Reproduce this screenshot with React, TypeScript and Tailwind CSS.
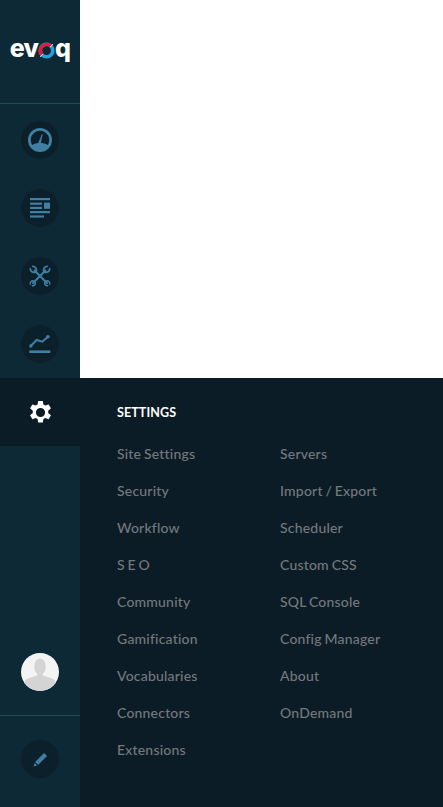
import { FaPen } from "react-icons/fa";

const leftLinks = ["Site Settings", "Security", "Workflow", "S E O", "Community", "Gamification", "Vocabularies", "Connectors", "Extensions"];
const rightLinks = ["Servers", "Import / Export", "Scheduler", "Custom CSS", "SQL Console", "Config Manager", "About", "OnDemand"];

function GaugeIcon() {
  return (
    <svg viewBox="0 0 24 24" className="size-[24px]">
      <circle cx="12" cy="12" r="12" fill="#3f7fa3" />
      <path d="M4.300 17a9.200 9.200 0 1 1 15.400 0c-2.200-1.400-4.500-2-7.700-2s-5.500.6-7.700 2z" fill="#0c202c" />
      <path d="M9.900 15.800l4-9.800.8.300-2.200 10.200a1.400 1.400 0 0 1-2.600-.7z" fill="#3f7fa3" />
    </svg>
  );
}

function ArticleIcon() {
  return (
    <svg viewBox="0 0 20 20" className="size-[20px]" fill="#3f7fa3">
      <rect x="0" y="0" width="20" height="2.200" />
      <rect x="0" y="4.600" width="12" height="2.200" />
      <rect x="14" y="4.600" width="6" height="6.200" />
      <rect x="0" y="8.800" width="12" height="2.200" />
      <rect x="0" y="13" width="20" height="2.200" />
      <rect x="0" y="17.400" width="14" height="2.200" />
    </svg>
  );
}

function ToolsIcon() {
  return (
    <svg viewBox="0 0 22 22" className="size-[22px]" fill="none" stroke="#3f7fa3" strokeLinecap="round">
      <path d="M5.500 5.500L18 18" strokeWidth="2" />
      <path d="M16.500 5.500L4 18" strokeWidth="2" />
      <path d="M1.300 3.800a3.600 3.600 0 0 0 5 3.300M3.800 1.300a3.600 3.600 0 0 1 3.300 5" strokeWidth="1.800" />
      <path d="M20.700 3.800a3.600 3.600 0 0 1-5 3.300M18.200 1.300a3.600 3.600 0 0 0-3.300 5" strokeWidth="1.800" />
      <path d="M1.300 19a2.700 2.700 0 0 1 3.300-3.100M6.300 17.500a2.700 2.700 0 0 1-3 3.200" strokeWidth="1.500" />
      <path d="M20.700 19a2.700 2.700 0 0 0-3.300-3.100M15.700 17.500a2.700 2.700 0 0 0 3 3.200" strokeWidth="1.500" />
    </svg>
  );
}

function ChartIcon() {
  return (
    <svg viewBox="0 0 22 20" className="w-[22px] h-[20px]" fill="none" stroke="#3f7fa3">
      <path d="M1.700 12L7.700 6l5.600 1.700L18.700 3" strokeWidth="2" />
      <circle cx="1.900" cy="12" r="1.700" fill="#3f7fa3" stroke="none" />
      <circle cx="18.900" cy="2.800" r="1.800" fill="#3f7fa3" stroke="none" />
      <rect x="0.300" y="16.400" width="21" height="2.600" fill="#3f7fa3" stroke="none" />
    </svg>
  );
}

function GearIcon() {
  return (
    <svg viewBox="0 0 24 24" className="size-[25px]" fill="#ffffff">
      <path
        fillRule="evenodd"
        d="M9.800 1h4.400l.6 3.300 1.800 1 3.200-1.100 2.200 3.800-2.600 2.200v2.200l2.600 2.200-2.200 3.800-3.200-1.100-1.800 1-.6 3.300H9.800l-.6-3.300-1.800-1-3.200 1.100-2.200-3.800 2.600-2.200v-2.200L2 8l2.200-3.800 3.200 1.100 1.800-1zM12 7.600a4.400 4.400 0 1 0 0 8.800 4.400 4.400 0 0 0 0-8.800z"
      />
    </svg>
  );
}

function PenIcon() {
  return (
    <svg viewBox="0 0 16 16" className="size-[15px]" fill="#3f7fa3">
      <path d="M11.800 1L15 4.200 5.400 13.800 2.200 10.600z" />
      <path d="M1.600 11.600l2.800 2.800L.600 15.400z" />
    </svg>
  );
}

function NavCircle({ children }: { children: React.ReactNode }) {
  return (
    <div className="h-[68px] flex items-center justify-center">
      <div className="size-[38px] rounded-full bg-[#0c202c] flex items-center justify-center">{children}</div>
    </div>
  );
}

function Logo() {
  return (
    <div className="flex items-center text-white font-extrabold text-[25px] leading-none font-['Inter',sans-serif] tracking-[-0.8px]">
      <span>ev</span>
      <svg viewBox="0 0 17 17" className="size-[17px] mt-[3px]">
        <circle cx="8.500" cy="8.500" r="6.300" fill="none" stroke="#1fa3dc" strokeWidth="3.600" />
        <path d="M13 4.100A6.300 6.300 0 0 0 4.100 13" fill="none" stroke="#e8173f" strokeWidth="3.600" />
        <path d="M12.100 5.200L15 2M2 15l2.900-3.100" stroke="#ffffff" strokeWidth="0.800" />
      </svg>
      <span>q</span>
    </div>
  );
}

export default function App() {
  return (
    <div className="flex w-[443px] h-[807px] font-['Lato',sans-serif] overflow-hidden bg-white">
      <aside className="w-[80px] flex flex-col bg-[#0e2936]">
        <div className="h-[104px] border-b border-[#26475a] flex items-center justify-center pb-[6px] shrink-0">
          <Logo />
        </div>
        <div className="pt-[2px]">
          <NavCircle><GaugeIcon /></NavCircle>
          <NavCircle><ArticleIcon /></NavCircle>
          <NavCircle><ToolsIcon /></NavCircle>
          <NavCircle><ChartIcon /></NavCircle>
        </div>
        <div className="h-[68px] bg-[#0c1c26] flex items-center justify-center">
          <GearIcon />
        </div>
        <div className="flex-1 flex flex-col justify-end">
          <div className="h-[62px] flex items-start justify-center">
            <div className="size-[38px] rounded-full overflow-hidden bg-[#f4f4f4]">
              <svg viewBox="0 0 38 38" className="size-full">
                <ellipse cx="19" cy="13.500" rx="5.800" ry="8" fill="#d4d4d4" />
                <path d="M16 19h6v3.500l9 3c2.500 1 4 3 4 6V38H3v-6.500c0-3 1.500-5 4-6l9-3z" fill="#d4d4d4" />
              </svg>
            </div>
          </div>
        </div>
        <div className="h-[92px] border-t border-[#26475a] flex items-start justify-center pt-[24px] shrink-0">
          <div className="size-[38px] rounded-full bg-[#0c202c] flex items-center justify-center">
            <PenIcon />
          </div>
        </div>
      </aside>
      <div className="flex-1 flex flex-col">
        <div className="h-[378px] bg-white shrink-0" />
        <div className="flex-1 bg-[#0c1c26] pl-[37px] pt-[27px]">
          <div className="text-white text-[12.500px] font-bold leading-[16px] tracking-[0.1px]">SETTINGS</div>
          <div className="flex mt-[23px]">
            <ul className="w-[163px]">
              {leftLinks.map((label) => (
                <li key={label} className="h-[37px] text-[14px] leading-[20px] tracking-[0.2px] [word-spacing:-1px] font-medium text-[#73787c]">{label}</li>
              ))}
            </ul>
            <ul>
              {rightLinks.map((label) => (
                <li key={label} className="h-[37px] text-[14px] leading-[20px] tracking-[0.2px] [word-spacing:-1px] font-medium text-[#73787c]">{label}</li>
              ))}
            </ul>
          </div>
        </div>
      </div>
    </div>
  );
}
